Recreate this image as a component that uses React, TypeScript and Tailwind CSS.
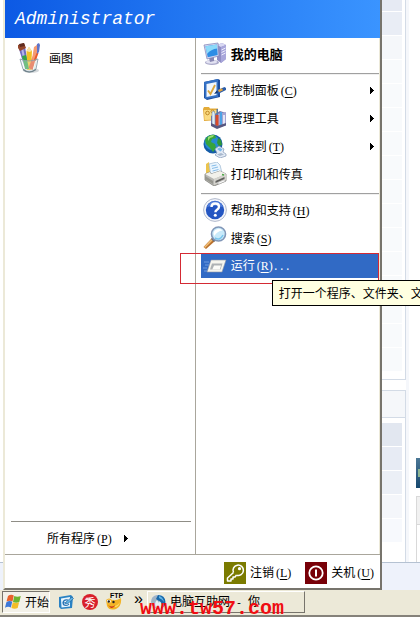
import type { ReactNode } from "react";

// Mnemonic shown after a label, e.g. (C)
function Key({ k }: { k: string }) {
  return (
    <span className="pl-0.5 font-['Liberation_Serif',serif] text-[12px]">
      (<u className="underline-offset-2">{k}</u>)
    </span>
  );
}

function Arrow() {
  return (
    <svg viewBox="0 0 5 9" className="h-[9px] w-[5px]" shapeRendering="crispEdges">
      <path d="M0 1h1v1h1v1h1v1h1v1h-1v1h-1v1h-1v1h-1z" fill="#000" />
    </svg>
  );
}

function PaintIcon() {
  return (
    <svg viewBox="0 0 24 32" className="h-8 w-6">
      <ellipse cx="14" cy="28.5" rx="8" ry="2.6" fill="#d5d9dc" />
      <path d="M5 16h15l-2 12H8z" fill="#cfe3d8" />
      <path d="M2 7l6-2 4 21-4 1z" fill="#6f6cc0" />
      <path d="M4 6l2-.5 4 20-2 1z" fill="#b3b4e8" />
      <path d="M1 3l6-2 2 5-6 3-2-3z" fill="#96482c" />
      <path d="M2 2l5-1 1 3-5 1z" fill="#5f2c20" />
      <path d="M9.500 9l2.500-4 3 4-1 19H10z" fill="#f2c024" />
      <path d="M9.500 9l2.500-4 3 4-2.500 1z" fill="#f5e3b0" />
      <path d="M5 14l4-1 3 14H8z" fill="#35a545" />
      <path d="M17.500 10l4 1-6 17-4-2z" fill="#e8582b" />
      <path d="M19 8l1-6 2-1 1 2-1 7-2 2z" fill="#5d73c9" />
      <path d="M17 5l3-2v7l-4 10-1-3z" fill="#f49a72" />
      <path d="M3 17q9 4 18 0l-2 10q-7 6-13 0z" fill="#e9f1f4" fillOpacity=".35" stroke="#8da1ab" strokeWidth=".9" />
      <path d="M5.500 20l2 7M18.500 19l-2 8" stroke="#fff" strokeOpacity=".8" />
      <path d="M6 27.500q6 5 13 0" fill="none" stroke="#71838c" strokeWidth="1.200" />
    </svg>
  );
}

function ComputerIcon() {
  return (
    <svg viewBox="0 0 24 24" className="size-6">
      <path d="M14 3l5-2 4 2v14l-5 4-4-3z" fill="#8f8dc4" />
      <path d="M14 3l5-2 4 2-5 2z" fill="#d9d9f3" />
      <path d="M18 5l5-2v14l-5 4z" fill="#a9a7db" />
      <path d="M18.500 8l4-2M18.500 10.500l4-2M18.500 13l4-2" stroke="#ececfc" />
      <ellipse cx="9" cy="20.500" rx="7" ry="2.500" fill="#aaa9c9" />
      <ellipse cx="8.500" cy="20" rx="5.500" ry="1.700" fill="#e2e2f2" />
      <path d="M6 16l5-1v4l-4 1z" fill="#8887b2" />
      <path d="M1 3l14-2 1 13-12 3z" fill="#d6d7f0" stroke="#7d80b3" strokeWidth=".7" />
      <path d="M2.500 4.200l11.500-1.700.7 10.500-10 2.300z" fill="#2e8de5" />
      <path d="M2.500 4.200l11.500-1.700.2 4Q8 7 4 12z" fill="#8cdaf9" />
    </svg>
  );
}

function ControlIcon() {
  return (
    <svg viewBox="0 0 24 24" className="size-6">
      <path d="M1 4l14-3 2 1v17L4 22l-3-2z" fill="#1d4c9c" />
      <path d="M1 4l14-3v18L2 21z" fill="#3471c5" />
      <path d="M3.500 6l10-2v13l-10 2z" fill="#f0f6fd" />
      <path d="M5 12.500l2.500 3.500L12 7" fill="none" stroke="#dba53b" strokeWidth="1.800" />
      <path d="M11.500 15.500l3-3.500 7-3 1.500 1v2l-7 3.500z" fill="#2b5da9" />
      <path d="M15 12l4-1.700 1 2-4 2z" fill="#e2a33e" />
      <path d="M11 16l3-3.500 1 2z" fill="#18386f" />
    </svg>
  );
}

function ToolsIcon() {
  return (
    <svg viewBox="0 0 24 24" className="size-6">
      <path d="M0 3l1-2h5l1 1.500h8V14l-14 1z" fill="#e3ab39" />
      <path d="M1 4h13v9.500L1.500 14z" fill="#fadb82" />
      <circle cx="4.500" cy="7" r="1.800" fill="none" stroke="#c08926" />
      <circle cx="9.500" cy="5.500" r="1.500" fill="none" stroke="#c08926" />
      <path d="M8 10l9-5 6 2v12l-9 3-6-3z" fill="#7776ad" />
      <path d="M14 8l9-2v13l-9 3z" fill="#a5a4d3" />
      <path d="M9 6l2-1 1 3v11l-3-1z" fill="#dcecf7" stroke="#6181a5" strokeWidth=".5" />
      <path d="M12.500 9h3v11l-3-.5z" fill="#d94b29" />
      <path d="M13.500 3h1.500v6h-1.500z" fill="#5678a2" />
      <path d="M17 6h2v13h-2z" fill="#4ca3e5" />
      <path d="M20 9h2v9h-2z" fill="#e6e6f5" />
      <path d="M8 17l6 3 9-3v2.500L14 23l-6-3z" fill="#58577f" />
    </svg>
  );
}

function GlobeIcon() {
  return (
    <svg viewBox="0 0 24 24" className="size-6">
      <circle cx="10" cy="10" r="9.500" fill="#145ca8" />
      <circle cx="9" cy="8.500" r="7.500" fill="#278bd2" />
      <path d="M4 3q4-3 8-2l1 3-4 1-1 3 4 2 1 4-3 4-3-4-4-4-1-4z" fill="#37a43c" />
      <path d="M5 3q3-2 6-2l-1 2-3 1-2 3z" fill="#9bdf70" />
      <path d="M15 4l3 2 1 5-3 1-2-3z" fill="#2e9839" />
      <path d="M12 15l4-3 5 3-1 3 3 2v2l-6 2-5-3 2-2z" fill="#e2eaf5" stroke="#8498b6" strokeWidth=".7" />
      <path d="M14 15l2.500-1.500 3 2-2 2z" fill="#78b7eb" />
      <path d="M14 20.500l4-1.500 3 1.500-4 1.500z" fill="#a9b9ce" />
    </svg>
  );
}

function PrinterIcon() {
  return (
    <svg viewBox="0 0 24 24" className="size-6">
      <path d="M3 2l3-2 1 10-4 3z" fill="#ecc44c" />
      <path d="M6 2l8-2 3 3 2 8-11 3z" fill="#eaf5fe" stroke="#8cabc8" strokeWidth=".6" />
      <path d="M8.500 4l5-1M9 6.500l6-1.500M9.500 9l6-1.500" stroke="#86bce8" />
      <path d="M2 12l5-2 1 2 9-3 6 3v7l-12 5-9-6z" fill="#b7b7b3" stroke="#75756f" strokeWidth=".7" />
      <path d="M2 12l5-2 1 2 9-3 6 3-12 5z" fill="#f2f1eb" />
      <path d="M11 17l12-5v6l-12 5z" fill="#d4d3cd" />
      <path d="M12.500 19l9-4v2l-9 4z" fill="#60605e" />
      <path d="M2 14l8 5v3l-8-5z" fill="#97978f" />
      <path d="M14 21l7-3 2 1-7 3z" fill="#fff" stroke="#999" strokeWidth=".4" />
      <path d="M19 12.500l2 .5" stroke="#49a846" strokeWidth="1.500" />
    </svg>
  );
}

function HelpIcon() {
  return (
    <svg viewBox="0 0 24 24" className="size-6">
      <circle cx="12" cy="12" r="11.400" fill="#f4f6fb" stroke="#a9b2c7" strokeWidth=".9" />
      <circle cx="12" cy="12" r="9.200" fill="#2456c2" />
      <path d="M4 9a8.500 8.500 0 0 1 16 0q-8-3-16 0z" fill="#5581dc" />
      <path d="M8.500 9q0-3.500 3.700-3.500 3.800 0 3.800 3.200 0 1.800-2 3-1.600 1-1.600 2.600" fill="none" stroke="#fff" strokeWidth="2.400" />
      <circle cx="12.300" cy="17.300" r="1.500" fill="#fff" />
    </svg>
  );
}

function SearchIcon() {
  return (
    <svg viewBox="0 0 24 24" className="size-6">
      <path d="M9 12l3 3-9 8-2.500-2z" fill="#b9702c" />
      <path d="M8.500 13l1.500 1-8 8-1-1z" fill="#f1bd74" />
      <path d="M10 11l3 3-2 2-3-3z" fill="#6a7180" />
      <circle cx="15.500" cy="8" r="7" fill="#c8eafa" stroke="#8297b8" strokeWidth="1.600" />
      <path d="M10.500 8a5.200 5.200 0 0 1 9-3.500Q14 5 11.500 10z" fill="#fff" />
      <path d="M12 12q5 3 8-3" fill="none" stroke="#79c5ed" strokeWidth="1.500" />
    </svg>
  );
}

function RunIcon() {
  return (
    <svg viewBox="0 0 24 24" className="size-6">
      <path d="M1 8h5M2 11h4M0 14h4M1 17h3" stroke="#6f9be0" strokeWidth="1" />
      <path d="M8 6h15l-4 12H4z" fill="#f6f5ee" stroke="#8d95a6" strokeWidth=".6" />
      <path d="M9 9.500h10.500l-2 6H7z" fill="#aeb2b4" />
      <path d="M11 11.500h7l-1.200 4H9.300z" fill="#fbfbf8" />
    </svg>
  );
}

function LogOffIcon() {
  return (
    <svg viewBox="0 0 22 22" className="size-[22px]">
      <rect width="22" height="22" fill="#7b7b00" />
      <g fill="none" stroke="#fff" strokeWidth="1.500" strokeLinejoin="round">
        <path d="M9.500 10.500L3.500 16v3H7v-2h2v-2h2l1.500-2" />
        <path d="M9.500 10.500a5.200 5.200 0 1 1 3 2.700" />
      </g>
      <circle cx="15.500" cy="6.700" r="1.600" fill="#fff" />
    </svg>
  );
}

function PowerIcon() {
  return (
    <svg viewBox="0 0 22 22" className="size-[22px]">
      <rect width="22" height="22" fill="#780008" />
      <circle cx="11" cy="11" r="6.700" fill="none" stroke="#fff" strokeWidth="1.800" />
      <path d="M11 7.500v7" stroke="#fff" strokeWidth="2" />
    </svg>
  );
}

function WindowsFlag() {
  return (
    <svg viewBox="0 0 16 16" className="size-4">
      <path d="M3 2q3-2 5.800-.5L7.500 7.500Q4.500 5.800 1.500 7.500z" fill="#e8622c" />
      <path d="M9.300 2q3 1.500 6.500 0l-1.500 6q-3 1.500-6.300 0z" fill="#6eb52e" />
      <path d="M1.400 8.200q3-2 5.800-.4l-1.300 5.700Q3 12 0 13.700z" fill="#3d78d8" />
      <path d="M7.800 8.300q3 1.500 6.300 0l-1.400 5.700q-3 1.500-6.300 0z" fill="#f3bd27" />
    </svg>
  );
}

function DesktopIcon() {
  return (
    <svg viewBox="0 0 16 16" className="size-4">
      <path d="M1 3l12-2 2 2-1 11-11 1-2-2z" fill="#2a82c4" />
      <path d="M3 4.500l9-1.500v9.500l-8.500 1z" fill="#e9f6fe" />
      <path d="M10 6q-4-1-5 2.500 0 3 3 3 2 0 3-1.500M5 9l5.500-.5" fill="none" stroke="#2672b5" strokeWidth="1.200" />
      <path d="M8 8l6-5 1.500 1.500L10 9.500 7.500 10z" fill="#63b4e4" stroke="#1b5e99" strokeWidth=".6" />
    </svg>
  );
}

function FtpIcon() {
  return (
    <div className="relative size-4">
      <svg viewBox="0 0 16 16" className="size-4">
        <path d="M0 6q3-3 6 0 4 1 9-2 1 8-5 11-7 2-9-3z" fill="#f3b325" />
        <path d="M1 6q3-1 4 1l-1 2-3-1z" fill="#fff" />
        <circle cx="2.800" cy="7.500" r="1.200" fill="#222" />
        <circle cx="7.500" cy="8" r="1.200" fill="#222" />
        <path d="M2 11q4 3 7 0-1 3-4 3z" fill="#c92a1b" />
        <path d="M9 12q4-1 5-5-1 6-5 6z" fill="#fbdf6c" />
      </svg>
      <span className="absolute -top-1 left-1 font-['Liberation_Sans',sans-serif] text-[7px] leading-3 font-bold">
        FTP
      </span>
    </div>
  );
}

function BrowserIcon() {
  return (
    <svg viewBox="0 0 16 16" className="size-4">
      <circle cx="8" cy="8" r="7.500" fill="#e6eef5" />
      <path d="M7 1Q1 2 1 8q1 5 6 7-4-5 0-9l2 3 1-7z" fill="#a0b3c5" />
      <path d="M8 1q7 0 7.500 7 0 5-5 7 3-4 0-7L6 5z" fill="#1768aa" />
      <path d="M9 2q4 1 5 6-2-3-5-4z" fill="#62b6e8" />
    </svg>
  );
}

type ItemProps = {
  icon: ReactNode;
  label: string;
  k?: string;
  arrow?: boolean;
};

function MenuItem({ icon, label, k, arrow }: ItemProps) {
  return (
    <button className="flex h-6 w-full items-center pr-1 pl-0.5 text-left">
      {icon}
      <span className="flex-1 pl-1">
        {label}
        {k && <Key k={k} />}
      </span>
      {arrow && <Arrow />}
    </button>
  );
}

function Separator() {
  return <div className="mt-[3px] mb-[-1px] h-0.5 border-b border-[#f0f0f0] bg-[#a0a0a0]" />;
}

function StartMenu() {
  return (
    <nav className="flex min-w-0 flex-1 flex-col border-r-2 border-b-2 border-l-2 border-r-[#77746c] border-b-[#77746c] border-l-[#ece9d8] bg-white">
      <header className="flex h-[38px] items-center bg-linear-to-r from-[#0c59e4] to-[#3a94ff] pl-2.5 font-['Liberation_Mono',monospace] text-[18px] text-white italic">
        Administrator
      </header>

      <div className="grid flex-1 grid-cols-[51%_1fr] border-r border-[#ece9d8]">
        <div className="flex flex-col border-r border-[#a9a69c] pr-1 pl-1.5">
          <button className="flex items-center gap-2 pt-1 pl-1.5 text-left">
            <PaintIcon />
            画图
          </button>
          <div className="mt-auto border-t border-[#8f8d86]">
            <button className="flex h-8 items-center gap-3 pl-9">
              <span>
                所有程序
                <Key k="P" />
              </span>
              <Arrow />
            </button>
          </div>
        </div>

        <div className="flex flex-col gap-1 pt-1 pl-[5px]">
          <div className="text-[13px] font-bold">
            <MenuItem icon={<ComputerIcon />} label="我的电脑" />
          </div>
          <Separator />
          <MenuItem icon={<ControlIcon />} label="控制面板" k="C" arrow />
          <MenuItem icon={<ToolsIcon />} label="管理工具" arrow />
          <MenuItem icon={<GlobeIcon />} label="连接到" k="T" arrow />
          <MenuItem icon={<PrinterIcon />} label="打印机和传真" />
          <Separator />
          <MenuItem icon={<HelpIcon />} label="帮助和支持" k="H" />
          <MenuItem icon={<SearchIcon />} label="搜索" k="S" />
          <div className="relative">
            <button className="flex h-6 w-full items-center bg-[#316ac5] pl-0.5 text-left text-white">
              <RunIcon />
              <span className="pl-1">
                运行
                <Key k="R" />
                <span className="font-['Liberation_Mono',monospace] text-[10px]">...</span>
              </span>
            </button>
            <div className="absolute -top-px right-0 -left-[21px] h-[31px] border border-solid border-[#d42a34]" />
            <div
              role="tooltip"
              className="absolute top-[26px] left-[71px] flex h-[26px] items-center border border-black bg-[#ffffe1] px-1.5 whitespace-nowrap text-black"
            >
              打开一个程序、文件夹、文
            </div>
          </div>
        </div>
      </div>

      <footer className="flex h-[34px] items-center justify-end gap-3.5 border-t border-[#a9a69c] pt-0.5 pr-1.5">
        <button className="flex items-center gap-1">
          <LogOffIcon />
          <span>
            注销
            <Key k="L" />
          </span>
        </button>
        <button className="flex items-center gap-1">
          <PowerIcon />
          <span>
            关机
            <Key k="U" />
          </span>
        </button>
      </footer>
    </nav>
  );
}

const faded = Array.from({ length: 13 }, (_, i) => i);

// Web page that shows to the right of the menu
function PageBehind() {
  return (
    <div className="flex w-[38px] flex-col bg-white">
      <div className="flex flex-1">
        <div className="flex w-6 flex-col">
          <div className="border-r border-b border-[#d3dbe6] pr-[3px] pb-2">
            <div className="h-[11px] bg-[#e6eaf3]" />
            <div className="h-6 border-t border-white bg-[#e9edf5]" />
            <div className="h-6 border-t border-white bg-[#f5f7fa]" />
            {faded.map((i) => (
              <div key={i} className="h-6 border-t border-white bg-[#f8fafc]" />
            ))}
          </div>
          <div className="mt-2.5 flex-1 border-t border-r border-[#d3dbe6]">
            <div className="h-[27px] border-b border-[#d3dbe6] bg-[#f5f7fa]" />
            <div className="pt-1 pr-[3px]">
              <div className="h-6 border-t border-white bg-[#e2e7f0]" />
              <div className="h-6 border-t border-white bg-[#e7ebf4]" />
              <div className="h-6 border-t border-white bg-[#ebeff6]" />
              <div className="h-6 border-t border-white bg-[#f4f6fa]" />
              <div className="h-6 border-t border-white bg-[#f7f9fd]" />
            </div>
          </div>
        </div>
        <div className="w-[3px] bg-[#f5f7fb]" />
        <div className="flex flex-1 flex-col items-end justify-end">
          <div className="flex h-[30px] w-1 flex-col justify-center bg-linear-to-b from-[#4c7896] to-[#16486e]">
            <div className="ml-0.5 h-2 bg-[#8fb693]" />
          </div>
          <div className="mt-2 h-[66px] w-1 border-t border-l border-[#d9d9d9]">
            <div className="h-7 border-b border-[#d9d9d9] bg-[#f1f1f1]" />
          </div>
        </div>
      </div>
      <div className="h-7 border-t border-[#b5c2d2] bg-[#eef2fb]" />
    </div>
  );
}

function Taskbar() {
  return (
    <div className="relative flex h-[27px] items-start border-b-2 border-[#85827a] bg-[#ece9d8] pt-px pl-0.5">
      <button className="flex h-[22px] w-12 items-center gap-1 border border-t-[#77746c] border-r-white border-b-white border-l-[#77746c] bg-[#f3f1e8] pl-0.5 whitespace-nowrap">
        <WindowsFlag />
        开始
      </button>
      <div className="flex h-[22px] flex-1 items-center gap-2 pl-2">
        <button aria-label="显示桌面">
          <DesktopIcon />
        </button>
        <button className="flex size-4 items-center justify-center rounded-full bg-[#d81f2b] text-[11px] leading-none text-white">
          秀
        </button>
        <button>
          <FtpIcon />
        </button>
        <span className="pb-1.5 pl-1 font-['Liberation_Sans',sans-serif] text-[16px] leading-4">»</span>
      </div>
      <button className="mr-[115px] flex h-[22px] w-[158px] items-center gap-1 border border-t-white border-r-[#77746c] border-b-[#77746c] border-l-white pl-0.5">
        <BrowserIcon />
        <span className="whitespace-pre">
          电脑互助网
          <span className="font-['Liberation_Mono',monospace] text-[10px]"> - </span>你
          <span className="font-['Liberation_Mono',monospace] text-[10px]">...</span>
        </span>
      </button>
      <span className="pointer-events-none absolute bottom-0 left-[140px] font-['Liberation_Mono',monospace] text-[20px] leading-3 font-bold text-[#f00d12]">
        www.tw57.com
      </span>
    </div>
  );
}

export default function App() {
  return (
    <div className="flex min-h-screen flex-col overflow-hidden bg-white font-['Noto_Sans_CJK_SC',sans-serif] text-[12px] leading-4 text-black">
      <div className="flex flex-1">
        <div className="flex w-[3px] flex-col justify-end">
          <div className="h-7 border-t border-[#b5c2d2] bg-[#eef2fb]" />
        </div>
        <StartMenu />
        <PageBehind />
      </div>
      <Taskbar />
    </div>
  );
}
